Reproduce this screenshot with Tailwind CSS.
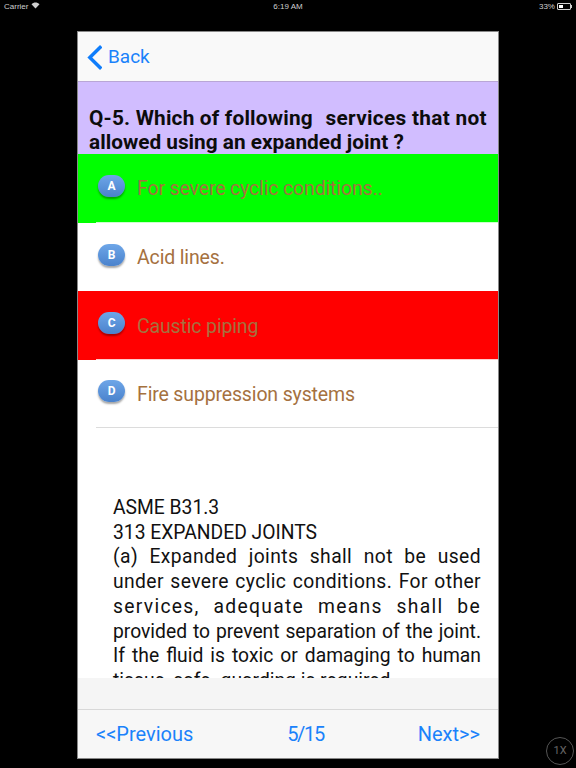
<!DOCTYPE html>
<html lang="en">
  <head>
    <meta charset="UTF-8" />
    <meta name="viewport" content="width=device-width, initial-scale=1.0" />
    <title>Quiz</title>
    <script src="https://cdn.jsdelivr.net/npm/@tailwindcss/browser@4"></script>
  </head>
  <body>
    <div class="relative w-[576px] h-[768px] overflow-hidden bg-black font-['Roboto',sans-serif]">
      <!-- status bar -->
      <div class="flex items-center justify-between h-[13px] pl-[4px] pr-[4px] text-[8px] leading-[13px] text-[#cfcfcf] font-['Liberation_Sans',sans-serif]">
        <div class="flex items-center gap-[3px] w-[100px]">
          <span>Carrier</span>
          <svg width="9" height="7" viewBox="0 0 9 7" class="mb-[2px]">
            <path d="M4.5 6.5 L0.5 2.2 C2.8 0 6.2 0 8.5 2.2 Z" fill="#cfcfcf" />
          </svg>
        </div>
        <span>6:19 AM</span>
        <div class="flex items-center justify-end gap-[2px] w-[100px]">
          <span>33%</span>
          <div class="flex items-center">
            <div class="w-[14px] h-[7px] border border-[#cfcfcf] rounded-[1px] p-[1px]">
              <div class="w-[4px] h-full bg-white"></div>
            </div>
            <div class="w-[1px] h-[3px] bg-[#cfcfcf]"></div>
          </div>
        </div>
      </div>

      <div class="flex flex-col w-[422px] h-[728px] ml-[77px] mt-[18px] bg-white border border-[#888]">
        <!-- nav -->
        <div class="flex items-center h-[49px] pl-[9px] pt-[2px] gap-[6px] bg-[#f9f9f9] text-[#1a82fb] text-[19px] shrink-0">
          <svg width="15" height="25" viewBox="0 0 15 25" fill="none" stroke="#0f7dfb" stroke-width="3.4" stroke-linecap="square">
            <path d="M13 2.5 L2.8 12.5 L13 22.5" />
          </svg>
          <span>Back</span>
        </div>

        <!-- question -->
        <div class="h-[73px] shrink-0 border-t border-[#b9a6d6] bg-[#d1bdff] px-[11px] pt-[24px] text-[20.8px] leading-[24px] font-bold text-[#0c0c0c] whitespace-pre"><span class="tracking-[0.2px]">Q-5. Which of following  </span><span class="ml-[2px] tracking-[0.3px]">services that not</span>
allowed using an expanded joint ?</div>

        <!-- answers -->
        <div class="h-[69px] shrink-0 bg-[#00ff00] pl-[18px]">
          <div class="flex items-center h-full pl-[2px] gap-[12px] border-b border-white/80 text-[19.5px] tracking-[-0.15px] text-[#a5713f]">
            <div class="w-[27px] h-[22px] mb-[5px] rounded-full bg-linear-to-b from-[#6ea6e8] to-[#4a82cc] shadow-[0_2px_2px_rgba(0,0,0,0.35)] flex items-center justify-center text-[12px] font-bold text-white">A</div>
            <span class="pt-[1px]">For severe cyclic conditions..</span>
          </div>
        </div>
        <div class="h-[68px] shrink-0 bg-white pl-[18px]">
          <div class="flex items-center h-full pl-[2px] gap-[12px] text-[19.5px] tracking-[-0.15px] text-[#a5713f]">
            <div class="w-[27px] h-[22px] mb-[5px] rounded-full bg-linear-to-b from-[#6ea6e8] to-[#4a82cc] shadow-[0_2px_2px_rgba(0,0,0,0.35)] flex items-center justify-center text-[12px] font-bold text-white">B</div>
            <span class="pt-[1px]">Acid lines.</span>
          </div>
        </div>
        <div class="h-[69px] shrink-0 bg-[#ff0000] pl-[18px]">
          <div class="flex items-center h-full pl-[2px] gap-[12px] border-b border-white/80 text-[19.5px] tracking-[-0.15px] text-[#a5713f]">
            <div class="w-[27px] h-[22px] mb-[5px] rounded-full bg-linear-to-b from-[#6ea6e8] to-[#4a82cc] shadow-[0_2px_2px_rgba(0,0,0,0.35)] flex items-center justify-center text-[12px] font-bold text-white">C</div>
            <span class="pt-[3px]">Caustic piping</span>
          </div>
        </div>
        <div class="h-[68px] shrink-0 bg-white pl-[18px]">
          <div class="flex items-center h-full pl-[2px] gap-[12px] border-b border-[#dcdcdc] text-[19.5px] tracking-[-0.15px] text-[#a5713f]">
            <div class="w-[27px] h-[22px] mb-[5px] rounded-full bg-linear-to-b from-[#6ea6e8] to-[#4a82cc] shadow-[0_2px_2px_rgba(0,0,0,0.35)] flex items-center justify-center text-[12px] font-bold text-white">D</div>
            <span class="pt-[3px]">Fire suppression systems</span>
          </div>
        </div>

        <!-- explanation, cut off by the footer -->
        <div class="flex-1 min-h-0 overflow-hidden pl-[35px] pr-[17px] pt-[68px] text-[19.3px] leading-[24.7px] text-[#111]">
          <p>ASME B31.3</p>
          <p>313 EXPANDED JOINTS</p>
          <p class="text-justify"><span class="tracking-[0.4px]">(a) Expanded joints shall not be used under severe cyclic conditions. For other</span> <span class="tracking-[1.3px]">services, adequate means shall be</span> provided to prevent separation of the joint. If the fluid is toxic or damaging to human tissue, safe- guarding is required.</p>
        </div>

        <!-- footer -->
        <div class="h-[31px] shrink-0 bg-[#f5f5f5]"></div>
        <div class="flex items-center justify-between h-[49px] shrink-0 border-t border-[#d8d8d8] bg-[#f7f7f7] pl-[18px] pr-[18px] text-[20px] text-[#1a82fb]">
          <span>&lt;&lt;Previous</span>
          <span class="tracking-[-1.3px]">5/15</span>
          <span>Next&gt;&gt;</span>
        </div>
      </div>

      <!-- zoom button -->
      <div class="absolute left-[546px] top-[737px] flex items-center justify-center w-[28px] h-[28px] rounded-full border border-[#555] text-[11px] text-[#666]">1X</div>
    </div>
  </body>
</html>
